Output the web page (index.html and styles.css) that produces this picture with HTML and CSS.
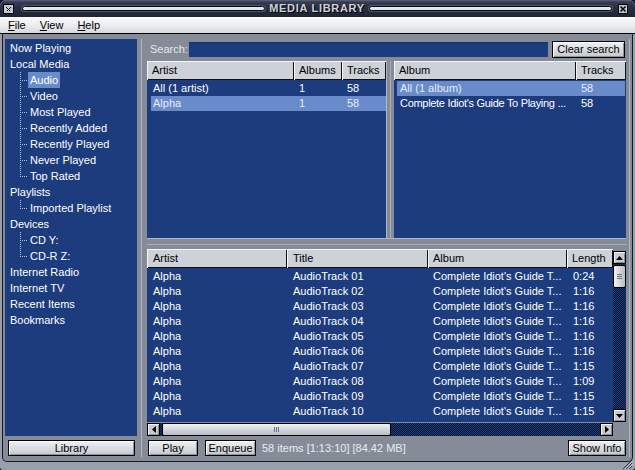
FILE: index.html
```html
<!DOCTYPE html>
<html>
<head>
<meta charset="utf-8">
<title>Media Library</title>
<link rel="stylesheet" href="styles.css">
</head>
<body>
<div class="window">
  <div class="titlebar">
    <span class="ticon"><svg width="11" height="10" viewBox="0 0 11 10"><rect x="0.5" y="0.5" width="10" height="9" fill="#c4c8d0" stroke="#000"/><path d="M3 3h1v1H3zM7 3h1v1H7zM4 4h1v1H4zM6 4h1v1H6zM5 5h1v1H5zM4 6h1v1H4zM6 6h1v1H6z" fill="#111"/></svg></span>
    <span class="groove"></span>
    <span class="title">MEDIA LIBRARY</span>
    <span class="groove"></span>
    <span class="tclose"><svg width="10" height="10" viewBox="0 0 10 10"><rect x="0.5" y="0.5" width="9" height="9" fill="#c4c8d0" stroke="#000"/><path d="M2.5 2.5l5 5M7.5 2.5l-5 5" stroke="#000" stroke-width="1.5"/></svg></span>
  </div>
  <div class="menubar">
    <span class="mi"><u>F</u>ile</span>
    <span class="mi"><u>V</u>iew</span>
    <span class="mi"><u>H</u>elp</span>
  </div>
  <div class="frame">
    <div class="leftcol">
      <div class="tree">
        <div class="node">Now Playing</div>
        <div class="node">Local Media</div>
        <div class="kids">
          <div class="kid"><span class="branch"></span><span class="label sel">Audio</span></div>
          <div class="kid"><span class="branch"></span><span class="label">Video</span></div>
          <div class="kid"><span class="branch"></span><span class="label">Most Played</span></div>
          <div class="kid"><span class="branch"></span><span class="label">Recently Added</span></div>
          <div class="kid"><span class="branch"></span><span class="label">Recently Played</span></div>
          <div class="kid"><span class="branch"></span><span class="label">Never Played</span></div>
          <div class="kid last"><span class="branch"></span><span class="label">Top Rated</span></div>
        </div>
        <div class="node">Playlists</div>
        <div class="kids">
          <div class="kid last"><span class="branch"></span><span class="label">Imported Playlist</span></div>
        </div>
        <div class="node">Devices</div>
        <div class="kids">
          <div class="kid"><span class="branch"></span><span class="label">CD Y:</span></div>
          <div class="kid last"><span class="branch"></span><span class="label">CD-R Z:</span></div>
        </div>
        <div class="node">Internet Radio</div>
        <div class="node">Internet TV</div>
        <div class="node">Recent Items</div>
        <div class="node">Bookmarks</div>
      </div>
      <div class="btn lib">Library</div>
    </div>
    <div class="main">
      <div class="searchrow">
        <span class="slabel">Search:</span>
        <span class="sinput"></span>
        <div class="btn clear">Clear search</div>
      </div>
      <div class="panes">
        <div class="pane artists">
          <div class="hdr">
            <div class="hc c-artist">Artist</div>
            <div class="hc c-albums">Albums</div>
            <div class="hc c-tracks">Tracks</div>
          </div>
          <div class="pbody">
            <div class="prow">
              <span class="pc">All (1 artist)</span><span class="pc">1</span><span class="pc">58</span>
            </div>
            <div class="prow selrow">
              <span class="pc">Alpha</span><span class="pc">1</span><span class="pc">58</span>
            </div>
          </div>
        </div>
        <div class="vsplit"></div>
        <div class="pane albums">
          <div class="hdr">
            <div class="hc c-album">Album</div>
            <div class="hc c-atracks">Tracks</div>
          </div>
          <div class="pbody">
            <div class="prow selrow">
              <span class="pc">All (1 album)</span><span class="pc">58</span>
            </div>
            <div class="prow">
              <span class="pc tight">Complete Idiot's Guide To Playing ...</span><span class="pc">58</span>
            </div>
          </div>
        </div>
      </div>
      <div class="hsplit"></div>
      <div class="tracks">
        <div class="tmain">
          <div class="tlist">
            <div class="hdr">
              <div class="hc t-artist">Artist</div>
              <div class="hc t-title">Title</div>
              <div class="hc t-album">Album</div>
              <div class="hc t-len">Length</div>
            </div>
            <div class="tbody">
              <div class="trow"><span>Alpha</span><span>AudioTrack 01</span><span>Complete Idiot's Guide T...</span><span>0:24</span></div>
              <div class="trow"><span>Alpha</span><span>AudioTrack 02</span><span>Complete Idiot's Guide T...</span><span>1:16</span></div>
              <div class="trow"><span>Alpha</span><span>AudioTrack 03</span><span>Complete Idiot's Guide T...</span><span>1:16</span></div>
              <div class="trow"><span>Alpha</span><span>AudioTrack 04</span><span>Complete Idiot's Guide T...</span><span>1:16</span></div>
              <div class="trow"><span>Alpha</span><span>AudioTrack 05</span><span>Complete Idiot's Guide T...</span><span>1:16</span></div>
              <div class="trow"><span>Alpha</span><span>AudioTrack 06</span><span>Complete Idiot's Guide T...</span><span>1:16</span></div>
              <div class="trow"><span>Alpha</span><span>AudioTrack 07</span><span>Complete Idiot's Guide T...</span><span>1:15</span></div>
              <div class="trow"><span>Alpha</span><span>AudioTrack 08</span><span>Complete Idiot's Guide T...</span><span>1:09</span></div>
              <div class="trow"><span>Alpha</span><span>AudioTrack 09</span><span>Complete Idiot's Guide T...</span><span>1:15</span></div>
              <div class="trow"><span>Alpha</span><span>AudioTrack 10</span><span>Complete Idiot's Guide T...</span><span>1:15</span></div>
            </div>
          </div>
          <div class="vscroll">
            <div class="sb"><svg width="7" height="4" viewBox="0 0 7 4"><path d="M0 4L3.5 0L7 4z" fill="#000"/></svg></div>
            <div class="vtrack">
              <div class="vthumb"><span class="vgrip"></span></div>
            </div>
            <div class="sb"><svg width="7" height="4" viewBox="0 0 7 4"><path d="M0 0L7 0L3.5 4z" fill="#000"/></svg></div>
          </div>
        </div>
        <div class="hscrollrow">
          <div class="hscroll">
            <div class="sb"><svg width="4" height="7" viewBox="0 0 4 7"><path d="M4 0L4 7L0 3.5z" fill="#000"/></svg></div>
            <div class="htrack">
              <div class="hthumb"><span class="hgrip"></span></div>
            </div>
            <div class="sb"><svg width="4" height="7" viewBox="0 0 4 7"><path d="M0 0L4 3.5L0 7z" fill="#000"/></svg></div>
          </div>
          <div class="corner"></div>
        </div>
      </div>
      <div class="bottombar">
        <div class="btn play">Play</div>
        <div class="btn enq">Enqueue</div>
        <span class="status">58 items [1:13:10] [84.42 MB]</span>
        <div class="btn info">Show Info</div>
      </div>
    </div>
  </div>
  <span class="grip"><svg width="11" height="9" viewBox="0 0 11 9"><path d="M10 0L1 9M10 3L4 9M10 6L7 9" stroke="#2a303c" stroke-width="1"/><path d="M11 1L3 9M11 4L6 9" stroke="#c8ccd4" stroke-width="1"/></svg></span>
</div>
</body>
</html>
```

FILE: styles.css
```css
html, body {
  margin: 0;
  padding: 0;
  background: #10141e;
}

.window {
  position: relative;
  width: 635px;
  height: 470px;
  display: flex;
  flex-direction: column;
  background: #98a0ab;
  font-family: "Liberation Sans", Arial, sans-serif;
  font-size: 11px;
  color: #fff;
  overflow: hidden;
  border-radius: 6px 6px 3px 3px;
}

/* title bar */
.titlebar {
  height: 17px;
  flex: none;
  display: flex;
  align-items: center;
  padding: 0 7px 0 3px;
  background: linear-gradient(#5b6479 0, #353d50 2px, #262d3e 9px, #1f2534 100%);
  border-radius: 6px 6px 0 0;
  box-sizing: border-box;
}
.ticon { display: flex; width: 11px; height: 10px; margin-right: 8px; }
.tclose { display: flex; width: 10px; height: 10px; margin-left: 6px; }
.groove {
  flex: 1;
  height: 3px;
  background: #e2e5ea;
  border: 1px solid #080b12;
  border-radius: 3px;
  box-shadow: 0 0 0 1px #4c5468;
}
.title {
  margin: 0 4px;
  font-weight: bold;
  font-size: 11px;
  color: #cdd1da;
  letter-spacing: 0.7px;
  text-shadow: 1px 1px 0 #000;
  line-height: 17px;
}

/* menu */
.menubar {
  height: 16px;
  flex: none;
  display: flex;
  padding-left: 1px;
  background: linear-gradient(#fbfbfc, #e9eaed 60%, #d6d8dc);
  border-bottom: 1px solid #000;
  color: #000;
  line-height: 16px;
}
.mi { padding: 0 7px; }
.mi u { text-decoration: underline; }

/* frame */
.frame {
  flex: 1;
  display: flex;
  margin: 0 2px 8px;
  padding: 5px 2px 4px;
  background: #858c98;
  border: 1px solid #161a24;
  border-top: 0;
  border-radius: 0 0 5px 5px;
  min-height: 0;
}

.leftcol {
  width: 132px;
  flex: none;
  display: flex;
  flex-direction: column;
  gap: 4px;
  padding-bottom: 1px;
}
.tree {
  flex: 1;
  background: #1d3c7d;
  padding: 1px 5px;
  line-height: 16px;
  white-space: nowrap;
}
.node { height: 16px; }
.kids { margin-left: 10px; }
.kid { display: flex; height: 16px; }
.branch {
  width: 8px;
  height: 16px;
  flex: none;
  background-image:
    repeating-linear-gradient(to bottom, #b9c1d4 0 1px, transparent 1px 2px),
    repeating-linear-gradient(to right, #b9c1d4 0 1px, transparent 1px 2px);
  background-size: 1px 100%, 100% 1px;
  background-position: 0 0, 0 8px;
  background-repeat: no-repeat;
}
.kid.last .branch { background-size: 1px 9px, 100% 1px; }
.label { padding: 0 2px; }
.label.sel { background: #6a8bc9; }

.btn {
  height: 16px;
  box-sizing: border-box;
  border: 1px solid #000;
  background: linear-gradient(#eef0f3, #d2d5da 70%, #c2c6cc);
  box-shadow: inset 1px 1px 0 #fff, inset -1px -1px 0 #8e939b;
  color: #000;
  text-align: center;
  line-height: 14px;
  flex: none;
}
.lib { margin: 0 2px 0 3px; }

/* main */
.main {
  flex: 1;
  margin-left: 4px;
  border-left: 1px solid #b3b9c3;
  border-right: 1px solid #b3b9c3;
  padding: 2px 3px 1px 5px;
  display: flex;
  flex-direction: column;
  min-width: 0;
}
.searchrow {
  height: 17px;
  flex: none;
  display: flex;
  align-items: flex-start;
}
.slabel {
  padding: 0 1px 0 3px;
  line-height: 17px;
  color: #e3e7ee;
}
.sinput {
  flex: 1;
  height: 15px;
  margin: 1px 4px 0 0;
  background: #1d3c7d;
  box-shadow: inset 0 1px 0 #16306a;
}
.clear {
  width: 73px;
  height: 17px;
  line-height: 15px;
  margin-right: 1px;
}

.panes {
  height: 177px;
  flex: none;
  margin-top: 3px;
  display: flex;
}
.pane {
  display: flex;
  flex-direction: column;
  background: #1d3c7d;
}
.artists { width: 239px; }
.albums { flex: 1; }
.vsplit {
  width: 8px;
  flex: none;
  background: linear-gradient(to right, #b3b9c3 0 1px, transparent 1px 4px, #a7aeb9 4px 5px, transparent 5px);
}
.hsplit {
  height: 11px;
  flex: none;
  background: linear-gradient(to bottom, #b3b9c3 0 1px, transparent 1px 6px, #a7aeb9 6px 7px, transparent 7px);
}

.hdr {
  height: 19px;
  flex: none;
  display: flex;
  color: #000;
}
.hc {
  box-sizing: border-box;
  height: 19px;
  line-height: 18px;
  padding-left: 5px;
  background: #cdd1d8;
  box-shadow: inset 1px 1px 0 #f6f7f9, inset -1px -1px 0 #111;
  white-space: nowrap;
  overflow: hidden;
  flex: none;
}
.c-artist { width: 147px; }
.c-albums { width: 48px; }
.c-tracks { width: 44px; }
.c-album { width: 182px; }
.c-atracks { flex: 1; }

.pbody {
  flex: 1;
  padding-top: 1px;
}
.artists .pbody { padding-left: 4px; }
.albums .pbody { padding-left: 3px; padding-right: 1px; }
.prow {
  height: 15px;
  line-height: 15px;
  display: grid;
  white-space: nowrap;
}
.artists .prow { grid-template-columns: 143px 48px 43px; }
.albums .prow { grid-template-columns: 179px 1fr; }
.pc { padding-left: 5px; overflow: hidden; }
.artists .pc:first-child { padding-left: 2px; }
.albums .pc:first-child { padding-left: 3px; }
.tight { letter-spacing: -0.3px; }
.selrow { background: #6a8bc9; color: #e6ecf6; }

/* tracks list */
.tracks {
  height: 187px;
  flex: none;
  display: flex;
  flex-direction: column;
}
.tmain {
  height: 173px;
  flex: none;
  display: flex;
}
.tlist {
  width: 466px;
  flex: none;
  display: flex;
  flex-direction: column;
  background: #1d3c7d;
}
.t-artist { width: 140px; padding-left: 6px; }
.t-title { width: 141px; padding-left: 6px; }
.t-album { width: 139px; padding-left: 5px; }
.t-len { width: 46px; padding-left: 5px; }
.tbody {
  flex: 1;
  padding-top: 1px;
  overflow: hidden;
}
.trow {
  height: 15px;
  line-height: 15px;
  display: grid;
  grid-template-columns: 140px 141px 139px 46px;
  white-space: nowrap;
}
.trow span { padding-left: 6px; overflow: hidden; }
.trow span:nth-child(3) { padding-left: 5px; }

.vscroll {
  width: 13px;
  flex: none;
  display: flex;
  flex-direction: column;
  padding-top: 2px;
}
.sb {
  width: 13px;
  height: 13px;
  flex: none;
  box-sizing: border-box;
  border: 1px solid #000;
  background: #c7cbd1;
  box-shadow: inset 1px 1px 0 #f3f4f6, inset -1px -1px 0 #8a8f97;
  display: flex;
  align-items: center;
  justify-content: center;
}
.vtrack, .htrack {
  flex: 1;
  display: flex;
  background: repeating-conic-gradient(#1d3c7d 0 25%, #0a1430 0 50%) 0 0 / 2px 2px;
}
.vtrack { flex-direction: column; }
.vthumb {
  margin: 1px 0 0;
  height: 23px;
  box-sizing: border-box;
  border: 1px solid #000;
  border-radius: 2px;
  background: linear-gradient(to right, #f2f3f5, #cdd1d7 60%, #b7bcc4);
  display: flex;
  align-items: center;
  justify-content: center;
}
.vgrip {
  width: 5px;
  height: 5px;
  background: repeating-linear-gradient(to bottom, #6c727c 0 1px, transparent 1px 2px);
}
.hscrollrow {
  height: 14px;
  flex: none;
  display: flex;
  padding-top: 1px;
  box-sizing: border-box;
}
.hscroll {
  width: 466px;
  flex: none;
  display: flex;
}
.hthumb {
  margin-left: 2px;
  width: 229px;
  box-sizing: border-box;
  border: 1px solid #000;
  border-radius: 2px;
  background: linear-gradient(#f2f3f5, #cdd1d7 60%, #b7bcc4);
  display: flex;
  align-items: center;
  justify-content: center;
}
.hgrip {
  width: 5px;
  height: 5px;
  background: repeating-linear-gradient(to right, #6c727c 0 1px, transparent 1px 2px);
}
.corner { flex: 1; }

.bottombar {
  height: 16px;
  flex: none;
  margin-top: 4px;
  display: flex;
  align-items: center;
  padding-left: 1px;
}
.play { width: 50px; }
.enq { width: 51px; margin-left: 7px; }
.status {
  margin-left: 6px;
  color: #e8ecf2;
  white-space: nowrap;
}
.info { width: 58px; margin-left: auto; }

.grip {
  position: absolute;
  right: 2px;
  bottom: 1px;
  display: flex;
}
```
